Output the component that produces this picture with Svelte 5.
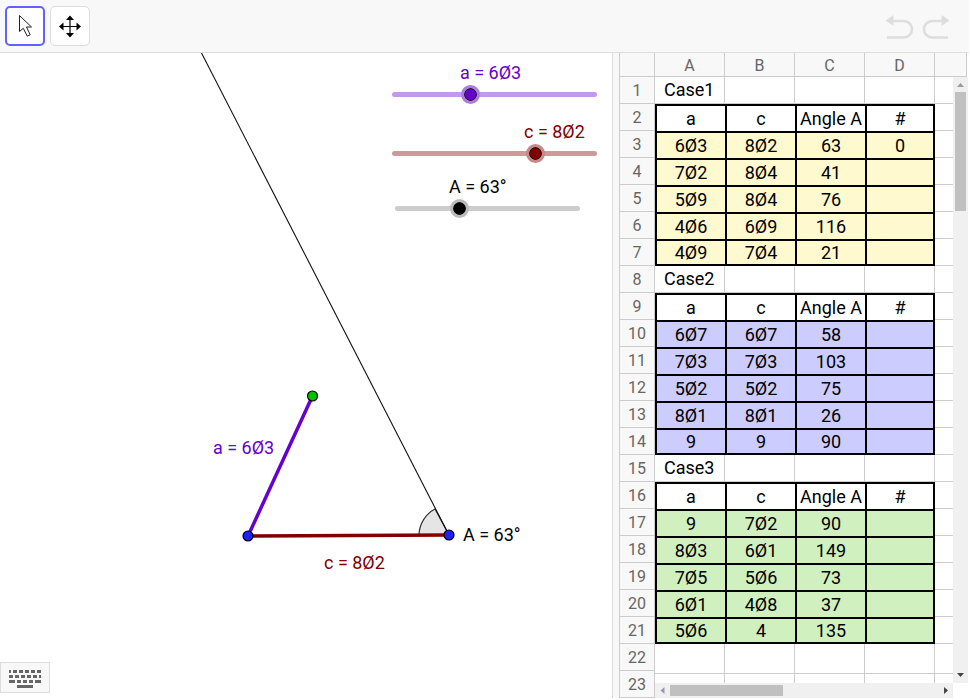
<script>
  let a = $state(6.3);
  let c = $state(8.2);
  let angle = $state(63);

  const mark = (n) => String(n).replace('.', 'Ø');

  let labelA = $derived('a = ' + mark(a));
  let labelC = $derived('c = ' + mark(c));
  let labelAngle = $derived('A = ' + angle + '°');

  const columns = ['A', 'B', 'C', 'D'];
  const heads = ['a', 'c', 'Angle A', '#'];

  const cases = [
    {
      name: 'Case1',
      tone: 'yellow',
      rows: [
        ['6Ø3', '8Ø2', '63', '0'],
        ['7Ø2', '8Ø4', '41', ''],
        ['5Ø9', '8Ø4', '76', ''],
        ['4Ø6', '6Ø9', '116', ''],
        ['4Ø9', '7Ø4', '21', '']
      ]
    },
    {
      name: 'Case2',
      tone: 'blue',
      rows: [
        ['6Ø7', '6Ø7', '58', ''],
        ['7Ø3', '7Ø3', '103', ''],
        ['5Ø2', '5Ø2', '75', ''],
        ['8Ø1', '8Ø1', '26', ''],
        ['9', '9', '90', '']
      ]
    },
    {
      name: 'Case3',
      tone: 'green',
      rows: [
        ['9', '7Ø2', '90', ''],
        ['8Ø3', '6Ø1', '149', ''],
        ['7Ø5', '5Ø6', '73', ''],
        ['6Ø1', '4Ø8', '37', ''],
        ['5Ø6', '4', '135', '']
      ]
    }
  ];

  const rowNumbers = Array.from({ length: 23 }, (_, i) => i + 1);
</script>

<div class="app">
  <header class="toolbar">
    <div class="tools">
      <button class="tool selected" aria-label="Move">
        <svg width="36" height="36" viewBox="2 2 36 36">
          <path d="M14.5 9.500V25.500L18.300 22.300L22.300 30.200L25.200 28.800L21.500 21H26.500Z" fill="#fff" stroke="#222" stroke-width="1" />
        </svg>
      </button>
      <button class="tool" aria-label="Move Graphics View">
        <svg width="38" height="38" viewBox="1 1 38 38">
          <path d="M20 12V28M12 20.500H28" stroke="#000" stroke-width="1.200" />
          <path d="M20 9.500L24 14H16ZM20 31.500L24 27H16ZM9 20.500L13.500 16.500V24.500ZM31 20.500L26.500 16.500V24.500Z" />
        </svg>
      </button>
    </div>
    <div class="history">
      <button aria-label="Undo">
        <svg width="32" height="28" viewBox="0 0 32 28">
          <path d="M8 8H19C31 8 31 24.500 19 24.500H3" fill="none" stroke="#ddd" stroke-width="2.600" />
          <path d="M1.500 7.500L9.500 2V13Z" fill="#ddd" />
        </svg>
      </button>
      <button aria-label="Redo">
        <svg width="32" height="28" viewBox="0 0 32 28">
          <path d="M22 8H13C1 8 1 24.500 13 24.500H28" fill="none" stroke="#ddd" stroke-width="2.600" />
          <path d="M29.500 7.500L21.500 2V13Z" fill="#ddd" />
        </svg>
      </button>
    </div>
  </header>

  <main class="views">
    <section class="graphics" aria-label="Graphics View">
      <svg class="drawing">
        <path d="M449 482H419A30 30 0 0 1 435 456Z" fill="#e5e5e5" stroke="#333" stroke-width="1.200" />
        <line x1="201" y1="-1" x2="449" y2="482" stroke="#111" stroke-width="1.100" />
        <line x1="248" y1="483" x2="449" y2="482" stroke="#800000" stroke-width="3.500" />
        <line x1="248" y1="483" x2="312.500" y2="343" stroke="#6600cc" stroke-width="3.500" />
        <g stroke="#000" stroke-width="1.200">
          <circle cx="248" cy="483" r="5" fill="#1f1fff" />
          <circle cx="449" cy="482" r="5" fill="#1f1fff" />
          <circle cx="312.500" cy="343" r="5" fill="#00c400" />
        </g>
        <g class="labels">
          <text x="213" y="401" fill="#6600cc">{labelA}</text>
          <text x="324" y="516" fill="#800000">{labelC}</text>
          <text x="463" y="488">{labelAngle}</text>
        </g>
      </svg>

      <label class="name name-a" for="slider-a">{labelA}</label>
      <input class="slider slider-a" id="slider-a" type="range" min="4" max="10" step="0.1" bind:value={a} />
      <label class="name name-c" for="slider-c">{labelC}</label>
      <input class="slider slider-c" id="slider-c" type="range" min="4" max="10" step="0.1" bind:value={c} />
      <label class="name name-angle" for="slider-angle">{labelAngle}</label>
      <input class="slider slider-angle" id="slider-angle" type="range" min="0" max="180" bind:value={angle} />

      <button class="keyboard" aria-label="Keyboard">
        <svg width="50" height="31" viewBox="0 0 50 31">
          <path
            d="M9 8h2v3h-2zM13 8h4v3h-4zM19 8h4v3h-4zM25 8h4v3h-4zM31 8h4v3h-4zM37 8h4v3h-4zM9 13h4v3h-4zM15 13h4v3h-4zM21 13h4v3h-4zM27 13h4v3h-4zM33 13h4v3h-4zM39 13h2v3h-2zM9 18h6v3h-6zM17 18h4v3h-4zM23 18h4v3h-4zM29 18h4v3h-4zM35 18h6v3h-6zM17 23h16v3h-16z"
            fill="#666"
          />
        </svg>
      </button>
    </section>

    <section class="side" aria-label="Spreadsheet">
      <div class="splitter"></div>
      <div class="sheet">
        <div class="col-heads">
          <span class="corner"></span>
          {#each columns as column}
            <span class="col-head">{column}</span>
          {/each}
          <span class="col-rest"></span>
        </div>
        <div class="sheet-body">
          <div class="row-heads">
            {#each rowNumbers as n}
              <span class="row-head">{n}</span>
            {/each}
          </div>
          <div class="pane">
            <div class="cells">
              <table>
                <colgroup>
                  <col class="wide" /><col class="wide" /><col class="wide" /><col class="wide" /><col />
                </colgroup>
                <tbody>
                  {#each cases as group}
                    <tr>
                      <td class="title">{group.name}</td>
                      <td></td><td></td><td></td><td class="rest"></td>
                    </tr>
                    <tr class="boxed">
                      {#each heads as head}<th scope="col">{head}</th>{/each}
                      <td class="rest"></td>
                    </tr>
                    {#each group.rows as row, i}
                      <tr class="boxed {group.tone}" class:last={i === group.rows.length - 1}>
                        {#each row as value}<td>{value}</td>{/each}
                        <td class="rest"></td>
                      </tr>
                    {/each}
                  {/each}
                  <tr class="tall"><td></td><td></td><td></td><td></td><td class="rest"></td></tr>
                  <tr><td></td><td></td><td></td><td></td><td class="rest"></td></tr>
                </tbody>
              </table>
            </div>
            <div class="bar horizontal">
              <svg width="15" height="15"><path d="M9.500 4V11L5.500 7.500Z" fill="#99a" /></svg>
              <span class="thumb"></span>
              <svg class="end" width="15" height="15"><path d="M6 4V11L10 7.500Z" fill="#444" /></svg>
            </div>
          </div>
          <div class="bar vertical">
            <svg width="15" height="15"><path d="M4 10H11L7.500 6Z" fill="#99a" /></svg>
            <span class="thumb"></span>
            <svg class="end" width="15" height="15"><path d="M4 5H11L7.500 9Z" fill="#444" /></svg>
          </div>
        </div>
      </div>
    </section>
  </main>
</div>

<style>
  :global(body) {
    background: #fff;
  }

  .app,
  .app * {
    box-sizing: border-box;
  }

  .app {
    display: flex;
    flex-direction: column;
    height: 100vh;
    padding: 0 1px 2px 0;
    overflow: hidden;
    font-family: Roboto, 'Liberation Sans', sans-serif;
    font-size: 18px;
    line-height: 22px;
    color: #000;
  }

  button {
    padding: 0;
    border: 0;
    background: none;
    cursor: pointer;
  }

  svg {
    display: block;
  }

  .toolbar {
    display: flex;
    flex: none;
    align-items: flex-start;
    justify-content: space-between;
    height: 53px;
    padding: 6px 17px 0 5px;
    border-bottom: 1px solid #ddd;
    background: #f8f8f8;
  }

  .tools {
    display: flex;
    gap: 5px;
  }

  .tool {
    width: 40px;
    height: 40px;
    overflow: hidden;
    border: 1px solid #ddd;
    border-radius: 5px;
    background: #fff;
  }

  .tool.selected {
    border: 2px solid #6161ff;
  }

  .history {
    display: flex;
    gap: 4px;
    padding-top: 7px;
  }

  .views {
    display: grid;
    flex: 1;
    grid-template-columns: 612fr 357fr;
    min-height: 0;
  }

  .graphics {
    position: relative;
    min-width: 0;
    overflow: hidden;
  }

  .drawing {
    width: 100%;
    height: 100%;
  }

  .name {
    position: absolute;
    white-space: nowrap;
  }

  .name-a {
    top: 9px;
    left: 460px;
    color: #6600cc;
  }

  .name-c {
    top: 68px;
    left: 524px;
    color: #800000;
  }

  .name-angle {
    top: 123px;
    left: 449px;
  }

  .slider {
    --halo: #c299eb;
    --ring: #ad7be0;
    --dot: #6600cc;
    position: absolute;
    width: 223px;
    height: 19px;
    margin: 0;
    appearance: none;
    background: none;
  }

  .slider::before {
    content: '';
    position: absolute;
    top: 7px;
    right: 9px;
    left: 9px;
    height: 5px;
    border-radius: 3px;
    background: var(--halo);
  }

  .slider::-webkit-slider-thumb {
    position: relative;
    width: 19px;
    height: 19px;
    appearance: none;
    border: 3px solid var(--ring);
    border-radius: 50%;
    background: var(--dot);
    background-clip: padding-box;
    box-shadow: inset 0 0 0 1px #111;
  }

  .slider-a {
    top: 32px;
    left: 383px;
  }

  .slider-c {
    --halo: #cf9999;
    --ring: #c48a8a;
    --dot: #800000;
    top: 91px;
    left: 383px;
  }

  .slider-angle {
    --halo: #ccc;
    --ring: #bbb;
    --dot: #000;
    top: 146px;
    left: 386px;
    width: 203px;
  }

  .keyboard {
    position: absolute;
    bottom: 5px;
    left: 0;
    width: 50px;
    height: 31px;
    border: 1px solid #ddd;
    background: #f8f8f8;
  }

  .keyboard svg {
    margin: -1px;
  }

  .side {
    display: flex;
    min-width: 0;
    min-height: 0;
  }

  .splitter {
    flex: none;
    width: 7px;
    border-left: 1px solid #ddd;
    background: #f8f8f8;
  }

  .sheet {
    display: flex;
    flex: 1;
    flex-direction: column;
    min-width: 0;
    padding-right: 1px;
    border-left: 1px solid #ccc;
  }

  .col-heads {
    display: flex;
    flex: none;
    height: 24px;
    margin-right: 1px;
    border-right: 1px solid #ccc;
    border-bottom: 1px solid #ccc;
    background: #f8f8f8;
    font-size: 16px;
    line-height: 26px;
    color: #666;
    text-align: center;
  }

  .corner {
    flex: none;
    width: 35px;
    border-right: 1px solid #ccc;
  }

  .col-head {
    flex: none;
    width: 70px;
    border-right: 1px solid #ccc;
  }

  .col-rest {
    flex: 1;
  }

  .sheet-body {
    display: flex;
    flex: 1;
    min-height: 0;
  }

  .row-heads {
    flex: none;
    width: 35px;
    overflow: hidden;
    background: #f8f8f8;
    font-size: 16px;
    line-height: 28px;
    color: #666;
    text-align: center;
  }

  .row-head {
    display: block;
    height: 27px;
    border-right: 1px solid #ccc;
    border-bottom: 1px solid #ccc;
  }

  .pane {
    display: flex;
    flex: 1;
    flex-direction: column;
    min-width: 0;
  }

  .cells {
    flex: 1;
    min-height: 0;
    overflow: hidden;
  }

  table {
    width: 100%;
    border-spacing: 0;
    table-layout: fixed;
  }

  .wide {
    width: 70px;
  }

  td,
  th {
    height: 27px;
    padding: 0;
    border: 0 solid #ccc;
    border-width: 0 1px 1px 0;
    font-weight: 400;
    text-align: center;
    white-space: nowrap;
  }

  .title {
    padding-left: 9px;
    text-align: left;
  }

  .boxed > :not(.rest) {
    border-color: #000;
    border-width: 2px 0 0 2px;
  }

  .last > :not(.rest) {
    border-bottom-width: 2px;
  }

  td.rest {
    border-right-width: 0;
  }

  .boxed > :nth-child(4):not(.rest) {
    border-right-width: 2px;
  }

  .yellow > :not(.rest) {
    background: #fff9cf;
  }

  .blue > :not(.rest) {
    background: #ccccff;
  }

  .green > :not(.rest) {
    background: #d0f0c0;
  }

  .tall td {
    height: 30px;
  }

  .bar {
    display: flex;
    flex: none;
    background: #f0f0f0;
  }

  .bar .thumb {
    background: #c0c0c0;
  }

  .horizontal {
    height: 15px;
  }

  .horizontal .thumb {
    width: 38%;
    margin: 2px 0;
  }

  .horizontal .end {
    margin-left: auto;
  }

  .vertical {
    flex-direction: column;
    width: 15px;
    margin-bottom: 15px;
  }

  .vertical .thumb {
    height: 119px;
    margin: 0 2px;
  }

  .vertical .end {
    margin-top: auto;
  }
</style>
